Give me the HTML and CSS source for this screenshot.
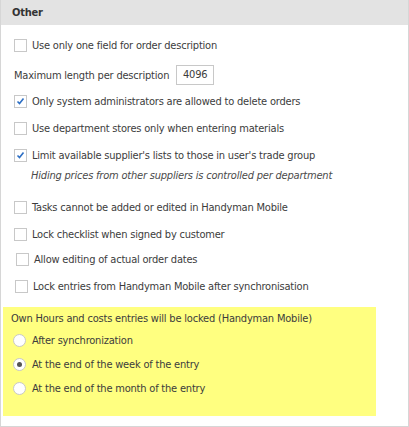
FILE: index.html
```html
<!DOCTYPE html>
<html lang="en">
<head>
    <meta charset="UTF-8">
    <title>Settings - Other</title>
    <link rel="stylesheet" href="styles.css">
</head>
<body>

<div class="panel">
    <div class="panel-header">Other</div>

    <div class="panel-body">
        <label class="opt first">
            <span class="box"></span>
            Use only one field for order description
        </label>

        <div class="opt field-row">
            <span>Maximum length per description</span>
            <span class="num-field">4096</span>
        </div>

        <label class="opt tight">
            <span class="box checked"><svg viewBox="0 0 11 11"><path d="M2.5 5.5 L4.5 7.5 L8.5 2.5" /></svg></span>
            Only system administrators are allowed to delete orders
        </label>

        <label class="opt">
            <span class="box"></span>
            Use department stores only when entering materials
        </label>

        <label class="opt">
            <span class="box checked"><svg viewBox="0 0 11 11"><path d="M2.5 5.5 L4.5 7.5 L8.5 2.5" /></svg></span>
            Limit available supplier's lists to those in user's trade group
        </label>
        <div class="note">Hiding prices from other suppliers is controlled per department</div>

        <label class="opt after-note">
            <span class="box"></span>
            Tasks cannot be added or edited in Handyman Mobile
        </label>

        <label class="opt">
            <span class="box"></span>
            Lock checklist when signed by customer
        </label>

        <label class="opt tight indent2">
            <span class="box"></span>
            Allow editing of actual order dates
        </label>

        <label class="opt indent1">
            <span class="box"></span>
            Lock entries from Handyman Mobile after synchronisation
        </label>

        <div class="lock-box">
            <div class="lock-title">Own Hours and costs entries will be locked (Handyman Mobile)</div>
            <label class="radio-row"><span class="radio"></span>After synchronization</label>
            <label class="radio-row"><span class="radio on"></span>At the end of the week of the entry</label>
            <label class="radio-row"><span class="radio"></span>At the end of the month of the entry</label>
        </div>
    </div>
</div>

</body>
</html>
```

FILE: styles.css
```css
body {
    margin: 0;
    background-color: #ffffff;
    font-family: "DejaVu Sans Condensed", "DejaVu Sans", sans-serif;
    font-size: 11px;
    letter-spacing: -0.2px;
    color: #3c3c3c;
}
.panel {
    width: 409px;
    height: 427px;
    box-sizing: border-box;
    border: 1px solid #d6d6d6;
    border-top: none;
    background-color: #fff;
    overflow: hidden;
}
.panel-header {
    height: 25px;
    margin: 0 -1px;
    padding-left: 12px;
    background-color: #e3e3e3;
    font-weight: bold;
    line-height: 25px;
    color: #333;
}
.panel-body {
    display: flex;
    flex-direction: column;
    padding: 0 2px;
}
.opt {
    display: flex;
    align-items: center;
    height: 20px;
    margin-top: 7px;
    padding-left: 11px;
}
.opt.first {
    margin-top: 10px;
}
.opt.tight {
    margin-top: 6px;
}
.opt.after-note {
    margin-top: 12px;
}
.opt.indent1 {
    padding-left: 12px;
}
.opt.indent2 {
    padding-left: 13px;
    margin-top: 5px;
}
.box {
    width: 11px;
    height: 11px;
    margin-right: 5px;
    border: 1px solid #c8c8c8;
    background-color: #fff;
    flex-shrink: 0;
}
.box svg {
    display: block;
    width: 11px;
    height: 11px;
}
.box path {
    fill: none;
    stroke: #2d6fc4;
    stroke-width: 1.6;
}
.field-row {
    margin-top: 10px;
}
.num-field {
    margin-left: 7px;
    width: 36px;
    height: 18px;
    border: 1px solid #c8c8c8;
    line-height: 18px;
    text-align: center;
}
.note {
    height: 18px;
    margin-top: 2px;
    padding-left: 28px;
    line-height: 18px;
    font-style: italic;
    color: #4a4a4a;
}
.lock-box {
    width: 373px;
    height: 109px;
    margin-top: 11px;
    box-sizing: border-box;
    padding: 5px 8px 0;
    background-color: #ffff80;
}
.lock-title {
    height: 14px;
    line-height: 14px;
}
.radio-row {
    display: flex;
    align-items: center;
    height: 20px;
    margin-top: 4px;
    padding-left: 2px;
}
.radio-row:first-of-type {
    margin-top: 4px;
}
.radio {
    position: relative;
    width: 11px;
    height: 11px;
    margin-right: 6px;
    border: 1px solid #c8c8c8;
    border-radius: 50%;
    background-color: #fff;
}
.radio.on::after {
    content: "";
    position: absolute;
    left: 3px;
    top: 3px;
    width: 5px;
    height: 5px;
    border-radius: 50%;
    background-color: #555;
}
```
